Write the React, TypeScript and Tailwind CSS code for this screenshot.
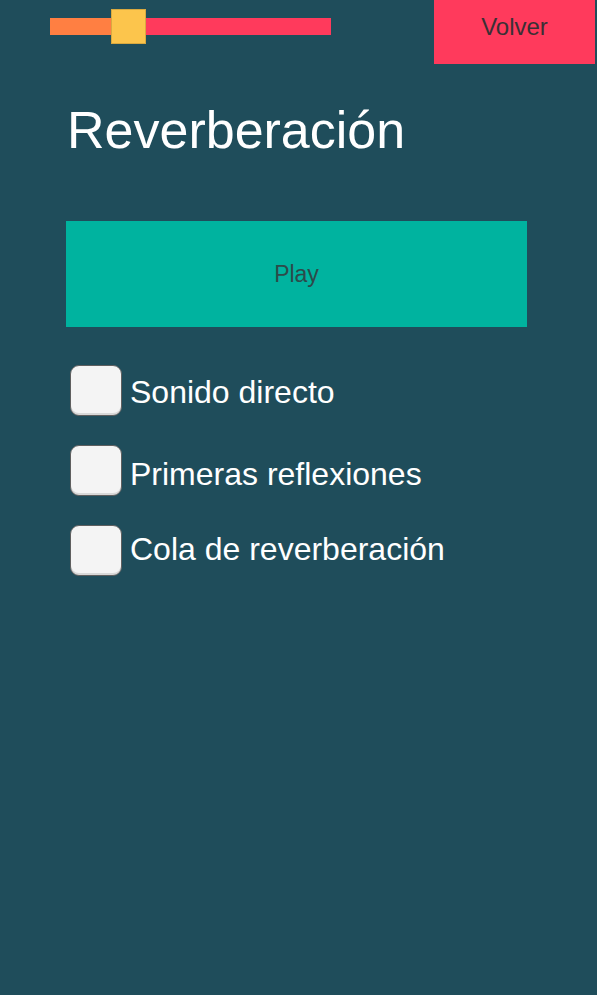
const options = ["Sonido directo", "Primeras reflexiones", "Cola de reverberación"]

export default function App() {
  return (
    <div
      className="w-[597px] h-[995px] bg-[#1f4d5b] text-white overflow-hidden"
      style={{ fontFamily: '"Liberation Sans", Arial, sans-serif' }}
    >
      {/* top bar: volume slider + back button */}
      <div className="flex items-start">
        <div className="relative ml-[50px] mt-[18px] flex h-[17px] w-[281px]">
          <div className="w-[62px] bg-[#ff7f42]" />
          <div className="flex-1 bg-[#ff3a5c]" />
          <div className="absolute left-[61px] top-[-9px] h-[35px] w-[35px] bg-[#fcc54c] border border-[#d9a940]" />
        </div>
        <button className="ml-auto mr-[2px] flex h-[64px] w-[161px] items-center justify-center bg-[#ff3a5c] pb-[10px] text-[24px] text-[#3a3035]">
          Volver
        </button>
      </div>

      <h1 className="ml-[67px] mt-[34px] text-[52px] leading-[64px]">Reverberación</h1>

      <button className="ml-[66px] mt-[59px] flex h-[106px] w-[461px] items-center justify-center bg-[#00b39f] text-[23px] text-[#2d4a4a]">
        Play
      </button>

      <div className="ml-[70px] mt-[38px] flex flex-col gap-[29px]">
        {options.map((label, i) => (
          <label key={label} className="flex items-center gap-[8px]">
            <span className="h-[51px] w-[52px] rounded-[9px] border-[1.5px] border-[#5f5f5f] bg-[#f4f4f4] shadow-[inset_0_-2px_0_#d8d8d8]" />
            <span className={`text-[32px] leading-[40px] ${i === 1 ? "mt-[6px]" : i === 2 ? "-mt-[4px]" : "mt-[2px]"}`}>
              {label}
            </span>
          </label>
        ))}
      </div>
    </div>
  )
}
